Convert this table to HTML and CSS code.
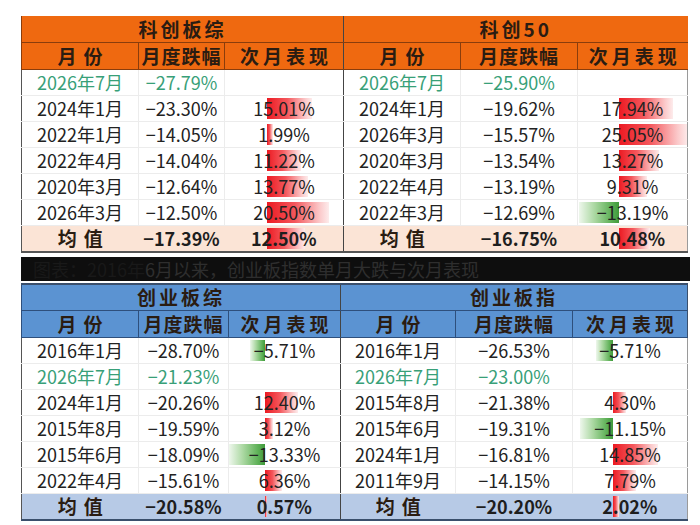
FILE: index.html
```html
<!DOCTYPE html>
<html lang="zh-CN">
<head>
<meta charset="utf-8">
<title>单月大跌与次月表现</title>
<link rel="stylesheet" href="styles.css">
</head>
<body>
<div class="page">
  <table class="t top">
    <colgroup><col class="a1"><col class="a2"><col class="a3"><col class="a4"><col class="a5"><col class="a6"></colgroup>
    <tr class="title"><th colspan="3" class="split">科创板综</th><th colspan="3">科创50</th></tr>
    <tr class="head">
      <th class="ls4">月份</th><th class="ls1">月度跌幅</th><th class="ls5 split">次月表现</th>
      <th class="ls4">月份</th><th class="ls1">月度跌幅</th><th class="ls5">次月表现</th>
    </tr>
    <tr class="row">
      <td class="g">2026年7月</td><td class="g">−27.79%</td><td class="nx split"></td>
      <td class="g">2026年7月</td><td class="g">−25.90%</td><td class="nx"></td>
    </tr>
    <tr class="row">
      <td>2024年1月</td><td>−23.30%</td><td class="nx split"><span class="bar up" style="left:42px;width:45px"></span><span class="v">15.01%</span></td>
      <td>2024年1月</td><td>−19.62%</td><td class="nx"><span class="bar up" style="left:41px;width:54px"></span><span class="v">17.94%</span></td>
    </tr>
    <tr class="row">
      <td>2022年1月</td><td>−14.05%</td><td class="nx split"><span class="bar up" style="left:42px;width:6px"></span><span class="v">1.99%</span></td>
      <td>2026年3月</td><td>−15.57%</td><td class="nx"><span class="bar up" style="left:41px;width:69px"></span><span class="v">25.05%</span></td>
    </tr>
    <tr class="row">
      <td>2022年4月</td><td>−14.04%</td><td class="nx split"><span class="bar up" style="left:42px;width:34px"></span><span class="v">11.22%</span></td>
      <td>2020年3月</td><td>−13.54%</td><td class="nx"><span class="bar up" style="left:41px;width:40px"></span><span class="v">13.27%</span></td>
    </tr>
    <tr class="row">
      <td>2020年3月</td><td>−12.64%</td><td class="nx split"><span class="bar up" style="left:42px;width:41px"></span><span class="v">13.77%</span></td>
      <td>2022年4月</td><td>−13.19%</td><td class="nx"><span class="bar up" style="left:41px;width:28px"></span><span class="v">9.31%</span></td>
    </tr>
    <tr class="row">
      <td>2026年3月</td><td>−12.50%</td><td class="nx split"><span class="bar up" style="left:42px;width:62px"></span><span class="v">20.50%</span></td>
      <td>2022年3月</td><td>−12.69%</td><td class="nx"><span class="bar down" style="left:1px;width:40px"></span><span class="v">−13.19%</span></td>
    </tr>
    <tr class="mean">
      <td class="ls4 lbl">均值</td><td>−17.39%</td><td class="nx split"><span class="bar up" style="left:42px;width:38px"></span><span class="v">12.50%</span></td>
      <td class="ls4 lbl">均值</td><td>−16.75%</td><td class="nx"><span class="bar up" style="left:41px;width:31px"></span><span class="v">10.48%</span></td>
    </tr>
  </table>

  <div class="band"><span class="band-dim">图表：2016年</span><span class="band-txt">6月以来，创业板指数单月大跌与次月表现</span></div>

  <table class="t bottom">
    <colgroup><col class="b1"><col class="b2"><col class="b3"><col class="b4"><col class="b5"><col class="b6"></colgroup>
    <tr class="title"><th colspan="3" class="split">创业板综</th><th colspan="3">创业板指</th></tr>
    <tr class="head">
      <th class="ls4">月份</th><th class="ls1">月度跌幅</th><th class="ls5 split">次月表现</th>
      <th class="ls4">月份</th><th class="ls1">月度跌幅</th><th class="ls5">次月表现</th>
    </tr>
    <tr class="row">
      <td>2016年1月</td><td>−28.70%</td><td class="nx split"><span class="bar down" style="left:21px;width:15px"></span><span class="v">−5.71%</span></td>
      <td>2016年1月</td><td>−26.53%</td><td class="nx"><span class="bar down" style="left:23px;width:17px"></span><span class="v">−5.71%</span></td>
    </tr>
    <tr class="row">
      <td class="g">2026年7月</td><td class="g">−21.23%</td><td class="nx split"></td>
      <td class="g">2026年7月</td><td class="g">−23.00%</td><td class="nx"></td>
    </tr>
    <tr class="row">
      <td>2024年1月</td><td>−20.26%</td><td class="nx split"><span class="bar up" style="left:36px;width:33px"></span><span class="v">12.40%</span></td>
      <td>2015年8月</td><td>−21.38%</td><td class="nx"><span class="bar up" style="left:40px;width:13px"></span><span class="v">4.30%</span></td>
    </tr>
    <tr class="row">
      <td>2015年8月</td><td>−19.59%</td><td class="nx split"><span class="bar up" style="left:36px;width:8px"></span><span class="v">3.12%</span></td>
      <td>2015年6月</td><td>−19.31%</td><td class="nx"><span class="bar down" style="left:7px;width:33px"></span><span class="v">−11.15%</span></td>
    </tr>
    <tr class="row">
      <td>2015年6月</td><td>−18.09%</td><td class="nx split"><span class="bar down" style="left:0;width:36px"></span><span class="v">−13.33%</span></td>
      <td>2024年1月</td><td>−16.81%</td><td class="nx"><span class="bar up" style="left:40px;width:45px"></span><span class="v">14.85%</span></td>
    </tr>
    <tr class="row">
      <td>2022年4月</td><td>−15.61%</td><td class="nx split"><span class="bar up" style="left:36px;width:17px"></span><span class="v">6.36%</span></td>
      <td>2011年9月</td><td>−14.15%</td><td class="nx"><span class="bar up" style="left:40px;width:23px"></span><span class="v">7.79%</span></td>
    </tr>
    <tr class="mean">
      <td class="ls4 lbl">均值</td><td>−20.58%</td><td class="nx split"><span class="bar up" style="left:36px;width:2px"></span><span class="v">0.57%</span></td>
      <td class="ls4 lbl">均值</td><td>−20.20%</td><td class="nx"><span class="bar up" style="left:40px;width:6px"></span><span class="v">2.02%</span></td>
    </tr>
  </table>
</div>
</body>
</html>
```

FILE: styles.css
```css
* { box-sizing: border-box; }

body {
  margin: 0;
  background: #ffffff;
  font-family: "Noto Sans CJK SC", "Noto Sans", sans-serif;
  color: #222222;
}

.page {
  padding: 16px 0 0 21px;
  width: 700px;
}

.t {
  border-collapse: collapse;
  table-layout: fixed;
  width: 666px;
}

.t th,
.t td {
  padding: 0;
  line-height: 20px;
  text-align: center;
  vertical-align: middle;
  white-space: nowrap;
}

/* column widths */
.a1 { width: 117px; } .a2 { width: 86px; } .a3 { width: 119px; }
.a4 { width: 117px; } .a5 { width: 117px; } .a6 { width: 110px; }
.b1 { width: 117px; } .b2 { width: 90px; } .b3 { width: 112px; }
.b4 { width: 115px; } .b5 { width: 117px; } .b6 { width: 115px; }

/* title + header rows */
.title th {
  height: 26px;
  font-size: 19px;
  font-weight: 700;
  letter-spacing: 3px;
  color: #2a1c12;
}
.head th {
  height: 27px;
  font-size: 19px;
  font-weight: 700;
  color: #2a1c12;
}
.ls1 { letter-spacing: 1px; }
.ls4 { letter-spacing: 7px; text-indent: 7px; }
.ls5 { letter-spacing: 4px; text-indent: 4px; }

.top .title th,
.top .head th {
  background: #ef6910;
  border: 1px solid #8a3d0c;
}
.top .title th { border-top: none; }
.top .title th:last-child,
.top .head th:last-child { border-right: none; }

.bottom .title th,
.bottom .head th {
  background: #5b93d2;
  border: 1px solid #2e4f7c;
}
.bottom .title th { border-top: 2px solid #3a4f6c; }
.bottom .title th:last-child,
.bottom .head th:last-child { border-right: 1px solid #3a4f6c; }

/* data rows */
.row td {
  height: 26px;
  font-size: 18px;
  border-bottom: 1px solid #ececec;
  border-right: 1px solid #ececec;
  background: #ffffff;
  overflow: hidden;
}

.row td:first-child,
.mean td:first-child { border-left: 1.5px solid #555555; }
.row td:last-child,
.mean td:last-child { border-right: 1px solid #9a9a9a; }

.t td.split,
.t th.split { border-right: 1.5px solid #444444; }

.g { color: #38a078; }

/* mean row */
.mean td {
  height: 27px;
  font-size: 18px;
  font-weight: 700;
  color: #1e1e1e;
  border-top: 1.5px solid #555555;
  border-bottom: 2px solid #555555;
  overflow: hidden;
}
.top .mean td { background: #fbe4d6; }
.bottom .mean td { background: #b7cae6; border-top-color: #3a4f6c; border-bottom-color: #3a4f6c; }
.mean .lbl { font-size: 19px; color: #2a1c12; }

/* data bars */
.nx { position: relative; }
.bar {
  position: absolute;
  top: 2px;
  bottom: 2px;
}
.bar.up {
  background: linear-gradient(90deg, #ec1a22 0%, #f4575c 45%, #fbc9ca 85%, #fdecec 100%);
}
.bar.down {
  background: linear-gradient(90deg, #eef7ec 0%, #a9d7a0 40%, #5fb158 80%, #3f9a3b 100%);
}
.v { position: relative; }

/* black caption band */
.band {
  margin: 4px 0 2px;
  width: 669px;
  height: 24px;
  background: #0e0e0e;
  font-size: 18px;
  line-height: 24px;
  padding-left: 12px;
  white-space: nowrap;
  overflow: hidden;
}
.band-dim { color: #191919; }
.band-txt { color: #2e2e2e; }
```
